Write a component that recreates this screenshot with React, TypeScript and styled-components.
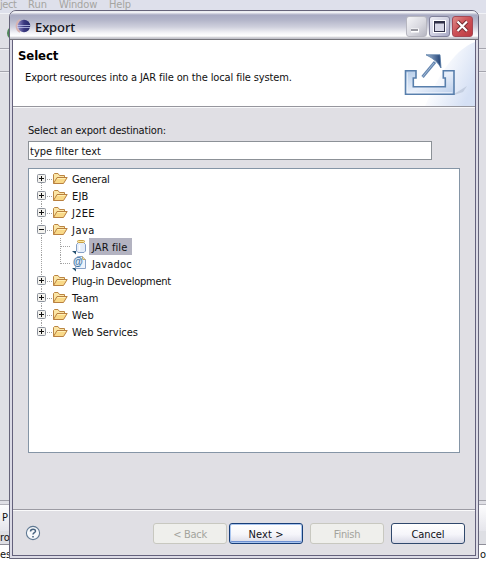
import React from 'react';
import styled, { createGlobalStyle, css } from 'styled-components';

const GlobalStyle = createGlobalStyle`
  body { margin: 0; overflow: hidden; background: #dfdfe4; }
  * { box-sizing: border-box; }
`;

const Desktop = styled.main`
  position: relative;
  width: 486px;
  height: 561px;
  overflow: hidden;
  background: #dfdfe5;
  font-family: 'DejaVu Sans Condensed', 'DejaVu Sans', sans-serif;
  font-stretch: condensed;
  font-size: 11px;
  color: #111;
`;

const Workbench = styled.div`
  display: flex;
  flex-direction: column;
  height: 561px;
`;

const MenuBar = styled.div`
  display: flex;
  height: 14px;
  flex: none;
  background: #dee0eb;
  border-bottom: 1px solid #f1f2f6;
  color: #a5a5a1;
  line-height: 9px;
`;

const MenuItem = styled.span<{ $width: number; $spacing?: number }>`
  width: ${p => p.$width}px;
  flex: none;
  white-space: nowrap;
  letter-spacing: ${p => p.$spacing ?? 0}px;
`;

const ToolBar = styled.div<{ $height: number }>`
  height: ${p => p.$height}px;
  flex: none;
  border-bottom: 1px solid #a4a4ad;
  box-shadow: 0 1px #eeeef2;
`;

const RunDot = styled.div`
  width: 14px;
  height: 14px;
  margin: 12px 0 0 7px;
  border-radius: 50%;
  background: #4f8758;
`;

const EditorSpace = styled.div`
  height: 429px;
  flex: none;
  border-bottom: 1px solid #a0a0a8;
`;

const ViewTab = styled.div`
  height: 27px;
  margin-top: 3px;
  padding: 6px 2px 0;
  flex: none;
  border-top: 1px solid #b3b3bb;
  background: linear-gradient(#fdfdfe, #e5e5eb);
`;

const ViewRow = styled.div<{ $white?: boolean }>`
  display: flex;
  justify-content: space-between;
  height: ${p => (p.$white ? 18 : 14)}px;
  flex: none;
  line-height: ${p => (p.$white ? 20 : 14)}px;
  background: ${p => (p.$white ? '#fff' : '#dedfe4')};
  border-bottom: ${p => (p.$white ? 0 : 1)}px solid #8f8f99;
`;

const Dialog = styled.section`
  position: absolute;
  left: 9px;
  top: 10px;
  width: 470px;
  height: 549px;
  display: flex;
  flex-direction: column;
  border: 1px solid #66647a;
  border-radius: 7px 7px 0 0;
  background: #dcdbe6;
  overflow: hidden;
`;

const TitleBar = styled.header`
  display: flex;
  align-items: flex-start;
  height: 29px;
  flex: none;
  padding: 5px 5px 0 5px;
  border-bottom: 1px solid #77767d;
  background: linear-gradient(#d9dae3 0, #fff 1px, #e0e1e9 2px, #a8aac2 4px, #b3b5c9 9px, #cfd0dd 16px, #f4f4f8 22px, #fff 25px, #c2c2ca 27px);
`;

const Title = styled.h1`
  margin: 3px 0 0 4px;
  flex: 1;
  font-family: 'Noto Sans', sans-serif;
  font-size: 13px;
  font-weight: 500;
  line-height: 16px;
  letter-spacing: -0.1px;
  color: #151520;
`;

const CaptionButtons = styled.div`
  display: flex;
  gap: 2px;
`;

const captionKinds = {
  min: css`
    border-color: #b7b7c0;
    background: linear-gradient(135deg, #f5f5f8, #d9d9e0 55%, #b6b6c1);
  `,
  max: css`
    border-color: #81819b;
    background: linear-gradient(135deg, #ededf5, #cfcfe0 55%, #a6a7c4);
  `,
  close: css`
    border-color: #a54854;
    background: linear-gradient(135deg, #dd8b88, #cd5358 45%, #bd3940);
  `,
};

const CaptionButton = styled.button<{ $kind: keyof typeof captionKinds }>`
  width: 21px;
  height: 21px;
  padding: 0;
  border: 1px solid;
  border-radius: 3px;
  ${p => captionKinds[p.$kind]}
  svg { display: block; }
`;

const ClientArea = styled.div`
  display: flex;
  flex-direction: column;
  flex: 1;
  margin: 0 2px 2px;
  border: 1px solid #64617c;
  border-top: 0;
  background: #e0dfe4;
`;

const Banner = styled.div`
  display: flex;
  justify-content: space-between;
  height: 67px;
  flex: none;
  border-bottom: 1px solid #96969d;
  background: #fff;
  box-shadow: 0 1px #f8f8fa;
`;

const BannerText = styled.div`
  padding: 8px 0 0 5px;
`;

const Heading = styled.h2`
  margin: 0;
  font-size: 13px;
  line-height: 16px;
  letter-spacing: -0.1px;
  color: #000;
`;

const Description = styled.p`
  margin: 7px 0 0 7px;
  line-height: 14px;
  white-space: nowrap;
  letter-spacing: -0.12px;
`;

const Body = styled.div`
  display: flex;
  flex-direction: column;
  height: 403px;
  flex: none;
  padding: 17px 14px 0 15px;
  border-bottom: 1px solid #9c9ba3;
  box-shadow: 0 1px #fafafb;
`;

const Label = styled.label`
  margin-left: -1px;
  padding-left: 1px;
  line-height: 14px;
  letter-spacing: -0.18px;
`;

const FilterInput = styled.input`
  width: 404px;
  height: 19px;
  margin-top: 3px;
  padding: 1px 1px 0;
  border: 1px solid #8c9197;
  border-radius: 0;
  outline: 0;
  background: #fff;
  color: #111;
  font: inherit;
  letter-spacing: 0;
`;

const Tree = styled.div`
  width: 432px;
  height: 285px;
  margin-top: 8px;
  padding: 1px 0 0 8px;
  border: 1px solid #8595a6;
  background: #fff;
`;

const TreeRow = styled.div`
  display: flex;
  align-items: center;
  height: 17px;
`;

const Guide = styled.svg`
  width: 15px;
  height: 17px;
  flex: none;
`;

const ItemIcon = styled.svg`
  width: 16px;
  height: 17px;
  flex: none;
`;

const ItemLabel = styled.span<{ $selected?: boolean; $child?: boolean; $spacing?: number }>`
  height: 17px;
  margin-left: 2px;
  padding: 1px 5px 0 ${p => (p.$child ? 3 : 2)}px;
  line-height: 17px;
  white-space: nowrap;
  letter-spacing: ${p => p.$spacing ?? 0}px;
  background: ${p => (p.$selected ? '#b3b3c1' : 'transparent')};
`;

const Footer = styled.footer`
  display: flex;
  align-items: flex-start;
  padding: 13px 10px 0 12px;
`;

const HelpIcon = styled.svg`
  width: 16px;
  height: 16px;
  margin: 2px auto 0 0;
`;

const Button = styled.button<{ $variant?: 'primary' | 'disabled'; $gap?: number }>`
  width: 74px;
  height: 21px;
  margin-left: ${p => p.$gap ?? 0}px;
  padding: 1px 0 0;
  border: 1px solid #30486c;
  border-radius: 3px;
  background: linear-gradient(#fff, #f5f5fa 55%, #d8d9e6);
  color: #101018;
  font: inherit;
  letter-spacing: -0.1px;
  ${p => p.$variant === 'primary' && css`
    border-color: #173e78;
    box-shadow: inset 0 0 0 1px #a9c5ef, inset 0 -2px #6e91d3;
    letter-spacing: 0.1px;
  `}
  ${p => p.$variant === 'disabled' && css`
    border-color: #c8c8c0;
    background: #efefec;
    color: #a3a39c;
    letter-spacing: -0.3px;
  `}
`;

const EclipseIcon = styled.svg`
  width: 16px;
  height: 16px;
  margin-top: 2px;
`;

const WizardArt = styled.svg`
  width: 90px;
  height: 66px;
`;

function EclipseLogo() {
  return (
    <EclipseIcon viewBox="0 0 16 16">
      <defs>
        <linearGradient id="orb" x1="0" x2="1">
          <stop offset="0" stopColor="#8e8ac5" /><stop offset=".5" stopColor="#3b397f" /><stop offset="1" stopColor="#25286b" />
        </linearGradient>
      </defs>
      <path d="M5 2A7 7 0 0 0 5 14" fill="none" stroke="#d8b3b0" strokeWidth="2" />
      <circle cx="9" cy="8" r="6.2" fill="url(#orb)" />
      <path d="M2 7.5h13M2 9.5h13" stroke="#c3c8ee" strokeWidth=".8" />
    </EclipseIcon>
  );
}

function ExportArt() {
  return (
    <WizardArt viewBox="0 0 90 66">
      <defs>
        <linearGradient id="glow" x1="0.1" x2="1" y1=".1" y2=".6">
          <stop offset=".25" stopColor="#fff" /><stop offset="1" stopColor="#d5e0f4" />
        </linearGradient>
        <linearGradient id="tray" x2="1" y2="1">
          <stop stopColor="#b3cbe8" /><stop offset=".5" stopColor="#e8effa" /><stop offset="1" stopColor="#b9cdea" />
        </linearGradient>
        <linearGradient id="arrow" x1="0" x2="1">
          <stop stopColor="#a9bfda" /><stop offset="1" stopColor="#1e3f73" />
        </linearGradient>
      </defs>
      <path d="M90 2C77 7 60 20 40 66H90Z" fill="url(#glow)" />
      <path d="M69 54L82 46 78 52 69 55Z" fill="#aab5c9" opacity=".5" />
      <path d="M20.5 30.8H31V38H28.3V46.7H60.3V38H58.3V30.8H69V54.3H20.5Z" fill="url(#tray)" stroke="#587fac" strokeWidth="1.6" />
      <path d="M22.3 32.5V52.7H67.3" fill="none" stroke="#f0f5fd" strokeWidth=".8" />
      <path d="M37.5 37L50 22" stroke="#6486b0" strokeWidth="3" />
      <path d="M37.5 37L49 23" stroke="#a3b9d4" strokeWidth="1" />
      <path d="M41 14.8H55L56 28Q52 20 41 14.8Z" fill="url(#arrow)" stroke="#567aa5" strokeWidth=".8" />
    </WizardArt>
  );
}

function Toggle({ open = false, first = false, last = false }) {
  return (
    <Guide viewBox="0 0 15 17">
      <path d={`M4.5 ${first ? 9 : 0}V${last ? 9 : 17}M10 9.5H15`} stroke="#a2a2a2" strokeDasharray="1 1" />
      <rect x=".5" y="4.5" width="8" height="8" rx="1" fill="#f3f2ee" stroke="#8c929c" />
      <path d={open ? 'M2 8.5H7' : 'M2 8.5H7M4.5 6V11'} stroke="#111" />
    </Guide>
  );
}

function Folder() {
  return (
    <ItemIcon viewBox="0 0 16 17">
      <path d="M1.5 13.5V4.5L2.5 3.5H6L7.5 5.5H12.5V8" fill="#fbe6a6" stroke="#bb8542" />
      <path d="M1.5 13.5L5 7.5H15.2L11.5 13.5Z" fill="#f9d988" stroke="#b98040" strokeLinejoin="round" />
      <path d="M5.5 8.5H13.5" stroke="#fff0b5" />
    </ItemIcon>
  );
}

const BranchGuides = styled.svg`
  width: 34px;
  height: 17px;
  flex: none;
`;

function Branch({ last = false }) {
  return (
    <BranchGuides viewBox="0 0 34 17">
      <path d={`M4.5 0V17M23.5 0V${last ? 9 : 17}M24 8.5H34`} stroke="#a2a2a2" strokeDasharray="1 1" />
    </BranchGuides>
  );
}

function JarIcon() {
  return (
    <ItemIcon viewBox="0 0 16 17">
      <path d="M1 13H5V16.5Z" fill="#275270" />
      <path d="M7.5 4.5L5.5 6.5V13L7 14.5H13L14.5 13V6.5L12.5 4.5Z" fill="#e5edf9" stroke="#849fc5" />
      <path d="M8.5 7V12.5" stroke="#fff" strokeWidth="1.5" />
      <rect x="6.5" y="2.5" width="7" height="2" rx="1" fill="#fae7a1" stroke="#c9a045" />
    </ItemIcon>
  );
}

const AtText = styled.text`
  font: bold 10px 'Liberation Sans', sans-serif;
  fill: #3f76a6;
`;

function JavadocIcon() {
  return (
    <ItemIcon viewBox="0 0 16 17">
      <path d="M1 13H5V16.5Z" fill="#275270" />
      <path d="M6.5 1.5H11.5L14.5 4.5V13.5H4.5Z" fill="#eef3fb" stroke="#8ba4c8" />
      <path d="M11.5 1.5V4.5H14.5" fill="#f5dd9a" stroke="#c3a76c" />
      <circle cx="7" cy="6.7" r="5" fill="#e1ebf6" />
      <AtText x="2" y="10">@</AtText>
    </ItemIcon>
  );
}

type Entry = { label: string; spacing?: number; kind?: 'jar' | 'doc' };

const entries: Entry[] = [
  { label: 'General', spacing: -0.2 },
  { label: 'EJB', spacing: 0.2 },
  { label: 'J2EE', spacing: 0.3 },
  { label: 'Java', spacing: 0.5 },
  { label: 'JAR file', kind: 'jar', spacing: 0.1 },
  { label: 'Javadoc', kind: 'doc', spacing: 0.15 },
  { label: 'Plug-in Development', spacing: -0.25 },
  { label: 'Team', spacing: 0.1 },
  { label: 'Web', spacing: 0.1 },
  { label: 'Web Services', spacing: -0.04 },
];

export default function App() {
  return (
    <>
      <GlobalStyle />
      <Desktop>
        <Workbench>
          <MenuBar>
            <MenuItem $width={28} $spacing={-0.4}>ject</MenuItem>
            <MenuItem $width={31}>Run</MenuItem>
            <MenuItem $width={50} $spacing={-0.15}>Window</MenuItem>
            <MenuItem $width={30} $spacing={-0.2}>Help</MenuItem>
          </MenuBar>
          <ToolBar $height={35}><RunDot /></ToolBar>
          <ToolBar $height={23} />
          <EditorSpace />
          <ViewTab>P</ViewTab>
          <ViewRow><span>ro</span></ViewRow>
          <ViewRow $white><span>es</span><span>o</span></ViewRow>
        </Workbench>
        <Dialog>
          <TitleBar>
            <EclipseLogo />
            <Title>Export</Title>
            <CaptionButtons>
              <CaptionButton $kind="min" aria-label="Minimize">
                <svg width="19" height="19"><path d="M4 13.5H12" stroke="#fff" strokeWidth="4" /><path d="M4 13H11" stroke="#9898a0" strokeWidth="2" /></svg>
              </CaptionButton>
              <CaptionButton $kind="max" aria-label="Maximize">
                <svg width="19" height="19"><rect x="4.5" y="4.5" width="10" height="10" fill="none" stroke="#fff" strokeWidth="3" /><rect x="4.5" y="4.5" width="10" height="10" fill="#d7d7e5" stroke="#303047" /><path d="M4 5.5H15" stroke="#303047" strokeWidth="2" /></svg>
              </CaptionButton>
              <CaptionButton $kind="close" aria-label="Close">
                <svg width="19" height="19"><path d="M4.5 4.5L14 14M14 4.5L4.5 14" stroke="#6f2c30" strokeWidth="4" /><path d="M4.5 4.5L14 14M14 4.5L4.5 14" stroke="#fff" strokeWidth="2.2" /></svg>
              </CaptionButton>
            </CaptionButtons>
          </TitleBar>
          <ClientArea>
            <Banner>
              <BannerText>
                <Heading>Select</Heading>
                <Description>Export resources into a JAR file on the local file system.</Description>
              </BannerText>
              <ExportArt />
            </Banner>
            <Body>
              <Label htmlFor="filter">Select an export destination:</Label>
              <FilterInput id="filter" defaultValue="type filter text" />
              <Tree>
                {entries.map((e, i) => (
                  <TreeRow key={e.label}>
                    {e.kind ? <Branch last={e.kind === 'doc'} /> : <Toggle open={e.label === 'Java'} first={i === 0} last={i === entries.length - 1} />}
                    {e.kind === 'jar' ? <JarIcon /> : e.kind === 'doc' ? <JavadocIcon /> : <Folder />}
                    <ItemLabel $selected={e.kind === 'jar'} $child={!!e.kind} $spacing={e.spacing}>{e.label}</ItemLabel>
                  </TreeRow>
                ))}
              </Tree>
            </Body>
            <Footer>
              <HelpIcon viewBox="0 0 16 16">
                <circle cx="8" cy="8" r="6.6" fill="#f7f9fc" stroke="#607993" strokeWidth="1.1" />
                <path d="M5.5 6.4C5.5 3.4 10.6 3.5 10.5 6.2C10.4 7.8 8 7.7 8 9.6M8 11V12.5" fill="none" stroke="#47627e" strokeWidth="1.5" />
              </HelpIcon>
              <Button $variant="disabled">&lt; Back</Button>
              <Button $variant="primary" $gap={2}>Next &gt;</Button>
              <Button $variant="disabled" $gap={7}>Finish</Button>
              <Button $gap={7}>Cancel</Button>
            </Footer>
          </ClientArea>
        </Dialog>
      </Desktop>
    </>
  );
}
